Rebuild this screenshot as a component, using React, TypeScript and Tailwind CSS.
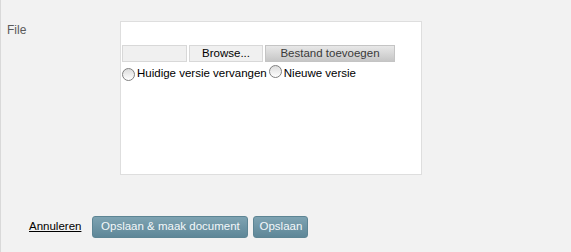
import React from "react";

function Radio() {
  return (
    <span className="inline-block w-[13px] h-[13px] rounded-full border border-[#808080] bg-[linear-gradient(#dcdcdc,#ffffff)] shrink-0" />
  );
}

export default function App() {
  return (
    <div className="w-[571px] h-[252px] bg-[#f2f2f2] border-l border-[#d9d9d9] text-[11.5px] font-['Liberation_Sans',Arial,sans-serif] overflow-hidden">
      <div className="flex pt-[21px]">
        <div className="w-[119px] pl-[6px] pt-[2px] text-[12px] text-[#5a5a5a] leading-[14px]">File</div>
        <div className="w-[302px] h-[154px] bg-white border border-[#dedede] pt-[23px] pl-[1px]">
          <div className="flex gap-[2px] h-[17px]">
            <div className="w-[65px] h-[17px] bg-[#f0f0f0] border border-[#d8d8d8]" />
            <div className="w-[74px] h-[17px] bg-[#f0f0f0] border border-[#d8d8d8] flex items-center justify-center text-black leading-none">Browse...</div>
            <div className="w-[130px] h-[17px] bg-[linear-gradient(#e8e8e8,#c6c6c6)] border border-[#c4c4c4] flex items-center justify-center text-[#3a3a3a] leading-none">Bestand toevoegen</div>
          </div>
          <div className="flex items-center mt-[5px] h-[14px] text-black">
            <Radio />
            <span className="ml-[2px]">Huidige versie vervangen</span>
            <span className="ml-[2px]"><Radio /></span>
            <span className="ml-[2px]">Nieuwe versie</span>
          </div>
        </div>
      </div>
      <div className="flex items-center mt-[41px] pl-[28px]">
        <a className="underline text-black mr-[11px] leading-none">Annuleren</a>
        <button className="h-[22px] w-[156px] rounded-[3px] border border-[#5d8594] bg-[linear-gradient(#7ea3b2,#5e8798)] text-[#f4f8fa] text-[11.5px] leading-none">Opslaan &amp; maak document</button>
        <button className="ml-[5px] h-[22px] w-[55px] rounded-[3px] border border-[#5d8594] bg-[linear-gradient(#7ea3b2,#5e8798)] text-[#f4f8fa] text-[11.5px] leading-none">Opslaan</button>
      </div>
    </div>
  );
}
